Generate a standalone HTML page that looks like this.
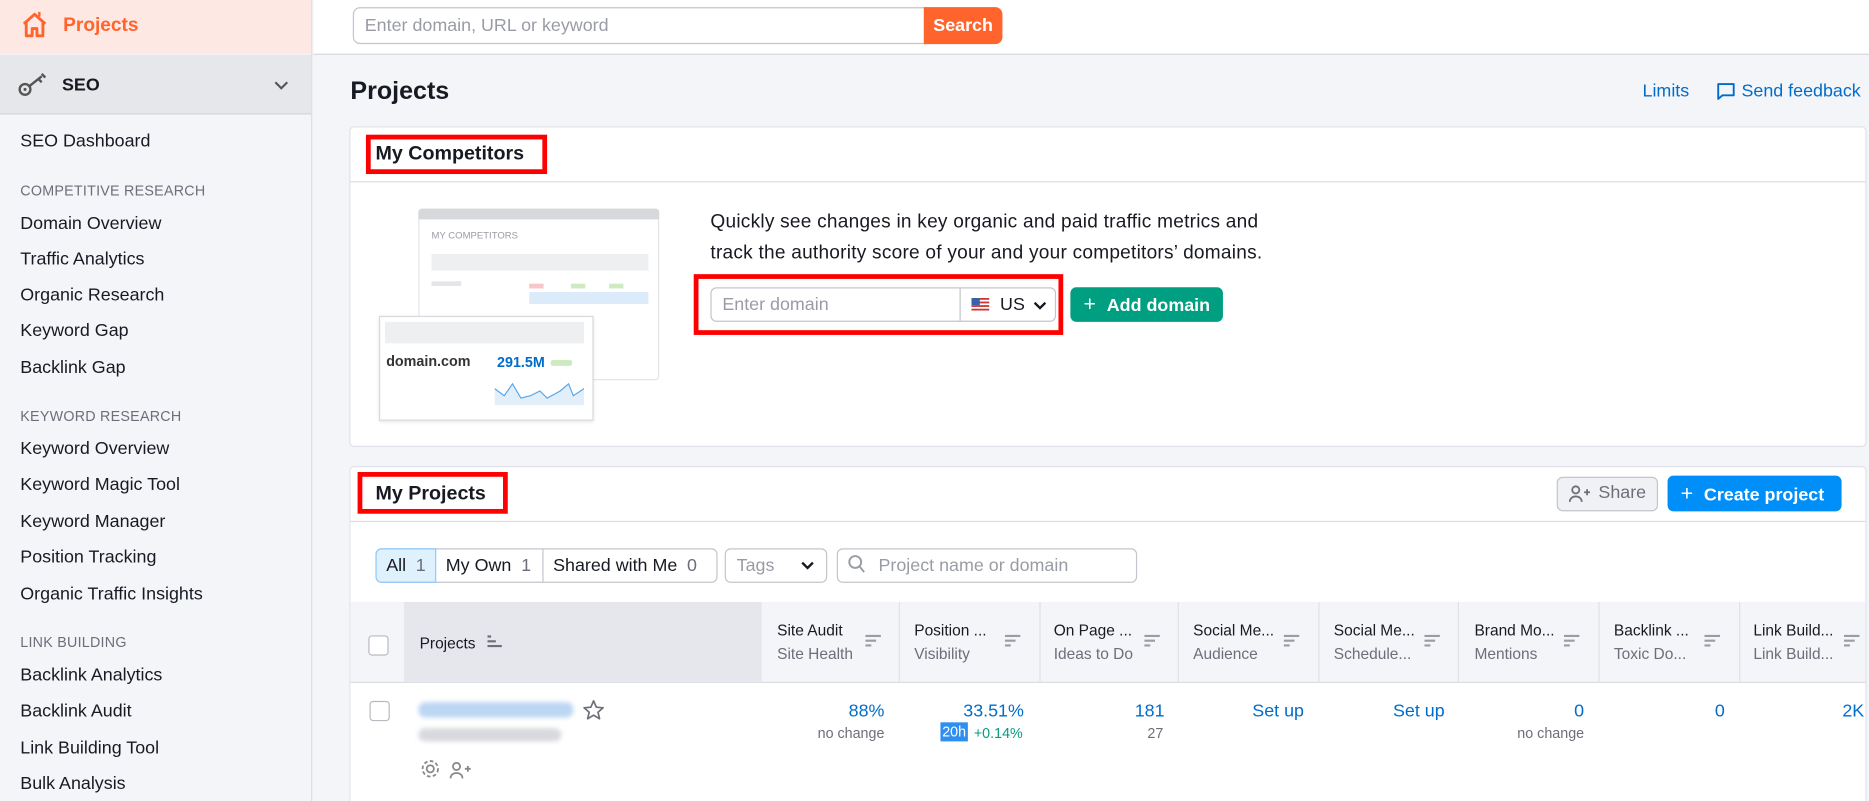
<!DOCTYPE html>
<html><head><meta charset="utf-8"><style>
*{box-sizing:border-box;margin:0;padding:0}
html,body{width:1869px;height:801px;overflow:hidden;background:#f4f5f9}
#w{position:absolute;left:0;top:0;width:1568px;height:672px;overflow:hidden;transform:scale(1.19196);transform-origin:0 0;font-family:"Liberation Sans",Arial,sans-serif;color:#171a22;background:#f4f5f9}
.a{position:absolute;white-space:nowrap}
.side{left:0;top:0;width:262px;height:672px;background:#f4f5f9;border-right:1px solid #dcdde3}
.mi{position:absolute;left:17px;font-size:15px;color:#171a22}
.sh{position:absolute;left:17px;font-size:12px;color:#6c6e79;letter-spacing:.2px}
.card{background:#fff;border:1px solid #e0e1e9;border-radius:4px}
.rb{border:4px solid #f00}
.blue{color:#006dca}
.hd{position:absolute;font-size:13px;color:#171a22;line-height:20px}
.hd span{color:#6c6e79}
.num{position:absolute;font-size:15px;color:#006dca;text-align:right}
.sub{position:absolute;font-size:12px;color:#6c6e79;text-align:right}
</style></head><body><div id="w">
<div class="a side">
 <div class="a" style="left:0;top:0;width:261px;height:45px;background:#fde8e4"></div>
 <svg class="a" style="left:17px;top:8px" width="24" height="26" viewBox="0 0 24 26"><path d="M3 12 L12 4 L21 12 M5 10 V22 H10 V16 H14 V22 H19 V10" fill="none" stroke="#ff642d" stroke-width="2.4" stroke-linejoin="round"/><path d="M16 2 V6" stroke="#ff642d" stroke-width="2"/></svg>
 <div class="a" style="left:53px;top:13px;font-size:16px;color:#ff642d;font-weight:bold">Projects</div>
 <div class="a" style="left:0;top:46px;width:261px;height:50px;background:#e6e7eb;border-bottom:1px solid #d3d4da"></div>
 <svg class="a" style="left:15px;top:60px" width="26" height="22" viewBox="0 0 26 22"><circle cx="6" cy="15" r="4.5" fill="none" stroke="#555" stroke-width="2"/><circle cx="6" cy="15" r="1.3" fill="#555"/><path d="M10 12 L20 4 M17 6 L20 9 M20 2 L23 5" stroke="#555" stroke-width="2" fill="none"/></svg>
 <div class="a" style="left:52px;top:63px;font-size:15px;font-weight:bold">SEO</div>
 <svg class="a" style="left:230px;top:68px" width="12" height="8"><path d="M1 1 L6 6 L11 1" fill="none" stroke="#555" stroke-width="1.8"/></svg>
 <div class="mi" style="top:110px">SEO Dashboard</div>
 <div class="sh" style="top:153px">COMPETITIVE RESEARCH</div>
 <div class="mi" style="top:179px">Domain Overview</div>
 <div class="mi" style="top:209px">Traffic Analytics</div>
 <div class="mi" style="top:239px">Organic Research</div>
 <div class="mi" style="top:269px">Keyword Gap</div>
 <div class="mi" style="top:300px">Backlink Gap</div>
 <div class="sh" style="top:342px">KEYWORD RESEARCH</div>
 <div class="mi" style="top:368px">Keyword Overview</div>
 <div class="mi" style="top:398px">Keyword Magic Tool</div>
 <div class="mi" style="top:429px">Keyword Manager</div>
 <div class="mi" style="top:459px">Position Tracking</div>
 <div class="mi" style="top:490px">Organic Traffic Insights</div>
 <div class="sh" style="top:532px">LINK BUILDING</div>
 <div class="mi" style="top:558px">Backlink Analytics</div>
 <div class="mi" style="top:588px">Backlink Audit</div>
 <div class="mi" style="top:619px">Link Building Tool</div>
 <div class="mi" style="top:649px">Bulk Analysis</div>
</div>
<div class="a" style="left:263px;top:0;width:1305px;height:46px;background:#fff;border-bottom:1px solid #d6d7dd"></div>
<div class="a" style="left:296px;top:6px;width:482px;height:31px;border:1px solid #c4c5cc;border-radius:6px 0 0 6px;background:#fff"></div>
<div class="a" style="left:306px;top:13px;font-size:15px;color:#9a9ca5">Enter domain, URL or keyword</div>
<div class="a" style="left:775px;top:6px;width:66px;height:31px;background:#ff642d;border-radius:0 6px 6px 0;color:#fff;font-size:15px;font-weight:bold;text-align:center;line-height:31px">Search</div>
<div class="a" style="left:294px;top:65px;font-size:21px;font-weight:bold;color:#171a22">Projects</div>
<div class="a blue" style="left:1378px;top:68px;font-size:15px">Limits</div>
<svg class="a" style="left:1440px;top:69px" width="16" height="16" viewBox="0 0 16 16"><path d="M1.5 1.5 H14.5 V11 H5 L1.5 14 Z" fill="none" stroke="#006dca" stroke-width="1.6" stroke-linejoin="round"/></svg>
<div class="a blue" style="left:1461px;top:68px;font-size:15px">Send feedback</div>
<div class="a card" style="left:293px;top:106px;width:1273px;height:269px"></div>
<div class="a" style="left:294px;top:152px;width:1271px;height:1px;background:#dcdde3"></div>
<div class="a rb" style="left:307px;top:113px;width:152px;height:33px"></div>
<div class="a" style="left:315px;top:120px;font-size:16.5px;font-weight:bold">My Competitors</div>
<div class="a" style="left:351px;top:175px;width:202px;height:144px;border:1px solid #e3e4e8;border-radius:3px;background:#fff"></div>
<div class="a" style="left:351px;top:175px;width:202px;height:9px;background:#d6d8dc;border-radius:3px 3px 0 0"></div>
<div class="a" style="left:362px;top:193px;font-size:8px;color:#9a9ca5">MY COMPETITORS</div>
<div class="a" style="left:362px;top:213px;width:182px;height:14px;background:#eeeff1"></div>
<div class="a" style="left:362px;top:236px;width:25px;height:4px;background:#e4e5e8"></div>
<div class="a" style="left:444px;top:238px;width:12px;height:4px;background:#f7c6c6"></div>
<div class="a" style="left:479px;top:238px;width:12px;height:4px;background:#cdeac0"></div>
<div class="a" style="left:511px;top:238px;width:12px;height:4px;background:#cdeac0"></div>
<div class="a" style="left:444px;top:245px;width:100px;height:10px;background:#dcebfa"></div>
<div class="a" style="left:318px;top:265px;width:180px;height:88px;border:1px solid #d8d9de;background:#fff;box-shadow:0 1px 3px rgba(0,0,0,.1)"></div>
<div class="a" style="left:323px;top:270px;width:167px;height:18px;background:#eeeff1"></div>
<div class="a" style="left:324px;top:296px;font-size:12px;font-weight:bold;color:#333">domain.com</div>
<div class="a" style="left:417px;top:297px;font-size:12px;font-weight:bold;color:#006dca">291.5M</div>
<div class="a" style="left:462px;top:302px;width:18px;height:5px;background:#cdeac0;border-radius:2px"></div>
<svg class="a" style="left:415px;top:318px" width="75" height="22"><path d="M0 8 L8 14 L15 4 L22 16 L30 14 L38 10 L44 16 L55 10 L62 4 L66 14 L75 8 L75 22 L0 22Z" fill="#e3eefb"/><path d="M0 8 L8 14 L15 4 L22 16 L30 14 L38 10 L44 16 L55 10 L62 4 L66 14 L75 8" fill="none" stroke="#57a6ec" stroke-width="1"/></svg>
<div class="a" style="left:596px;top:174px;font-size:16px;line-height:26px;color:#171a22;letter-spacing:.2px">Quickly see changes in key organic and paid traffic metrics and<br>track the authority score of your and your competitors’ domains.</div>
<div class="a rb" style="left:582px;top:230px;width:310px;height:51px"></div>
<div class="a" style="left:596px;top:241px;width:290px;height:29px;border:1px solid #c4c5cc;border-radius:5px;background:#fff"></div>
<div class="a" style="left:805px;top:242px;width:1px;height:27px;background:#c4c5cc"></div>
<div class="a" style="left:606px;top:247px;font-size:15px;color:#9a9ca5">Enter domain</div>
<svg class="a" style="left:815px;top:250px" width="15" height="11"><rect width="15" height="11" fill="#fff"/><g fill="#c33"><rect y="0" width="15" height="1.5"/><rect y="3" width="15" height="1.5"/><rect y="6" width="15" height="1.5"/><rect y="9" width="15" height="1.5"/></g><rect width="7" height="6" fill="#3b5fa8"/></svg>
<div class="a" style="left:839px;top:247px;font-size:15px">US</div>
<svg class="a" style="left:867px;top:253px" width="11" height="8"><path d="M1 1 L5.5 5.5 L10 1" fill="none" stroke="#171a22" stroke-width="2"/></svg>
<div class="a" style="left:898px;top:241px;width:128px;height:29px;background:#009f81;border-radius:5px;color:#fff;font-size:15px;font-weight:bold;line-height:29px;padding-left:11px"><span style="font-weight:normal;font-size:18px;margin-right:9px">+</span>Add domain</div>
<div class="a card" style="left:293px;top:391px;width:1273px;height:281px;border-bottom:none;border-radius:4px 4px 0 0"></div>
<div class="a" style="left:294px;top:437px;width:1271px;height:1px;background:#dcdde3"></div>
<div class="a rb" style="left:300px;top:396px;width:126px;height:35px"></div>
<div class="a" style="left:315px;top:405px;font-size:16.5px;font-weight:bold">My Projects</div>
<div class="a" style="left:1306px;top:400px;width:85px;height:29px;background:#f0f1f4;border:1px solid #c4c5cc;border-radius:5px"></div>
<svg class="a" style="left:1316px;top:406px" width="18" height="16"><circle cx="6" cy="5" r="3" fill="none" stroke="#6c6e79" stroke-width="1.5"/><path d="M1 15 C1 9 11 9 11 15" fill="none" stroke="#6c6e79" stroke-width="1.5"/><path d="M13 7 H18 M15.5 4.5 V9.5" stroke="#6c6e79" stroke-width="1.5"/></svg>
<div class="a" style="left:1341px;top:405px;font-size:15px;color:#6c6e79">Share</div>
<div class="a" style="left:1399px;top:399px;width:146px;height:30px;background:#008ff8;border-radius:5px;color:#fff;font-size:15px;font-weight:bold;line-height:30px;padding-left:11px"><span style="font-weight:normal;font-size:18px;margin-right:9px">+</span>Create project</div>
<div class="a" style="left:315px;top:460px;width:287px;height:29px;border:1px solid #c4c5cc;border-radius:5px;background:#fff"></div>
<div class="a" style="left:315px;top:460px;width:51px;height:29px;border:1px solid #8ec9f8;border-radius:5px 0 0 5px;background:#e0f1fe"></div>
<div class="a" style="left:455px;top:461px;width:1px;height:27px;background:#c4c5cc"></div>
<div class="a" style="left:324px;top:466px;font-size:15px">All <span style="color:#6c6e79;margin-left:4px">1</span></div>
<div class="a" style="left:374px;top:466px;font-size:15px">My Own <span style="color:#6c6e79;margin-left:4px">1</span></div>
<div class="a" style="left:464px;top:466px;font-size:15px">Shared with Me <span style="color:#6c6e79;margin-left:4px">0</span></div>
<div class="a" style="left:608px;top:460px;width:86px;height:29px;border:1px solid #c4c5cc;border-radius:5px;background:#fff"></div>
<div class="a" style="left:618px;top:466px;font-size:15px;color:#9a9ca5">Tags</div>
<svg class="a" style="left:672px;top:471px" width="11" height="8"><path d="M1 1 L5.5 5.5 L10 1" fill="none" stroke="#171a22" stroke-width="2"/></svg>
<div class="a" style="left:702px;top:460px;width:252px;height:29px;border:1px solid #c4c5cc;border-radius:5px;background:#fff"></div>
<svg class="a" style="left:711px;top:465px" width="16" height="17"><circle cx="6.5" cy="6.5" r="5" fill="none" stroke="#9a9ca5" stroke-width="1.6"/><path d="M10 10 L14 15" stroke="#9a9ca5" stroke-width="1.6"/></svg>
<div class="a" style="left:737px;top:466px;font-size:15px;color:#9a9ca5">Project name or domain</div>
<div class="a" style="left:294px;top:505px;width:1271px;height:68px;background:#f4f5f9;border-bottom:1px solid #dcdde3"></div>
<div class="a" style="left:339px;top:505px;width:300px;height:67px;background:#e6e7ec"></div>
<div class="a" style="left:309px;top:533px;width:17px;height:17px;border:1px solid #b8bac2;border-radius:3px;background:#fff"></div>
<div class="a" style="left:352px;top:532px;font-size:13px">Projects</div>
<svg class="a" style="left:408px;top:532px" width="14" height="12"><path d="M1 2 H4 M1 6 H8 M1 10 H13" stroke="#6c6e79" stroke-width="1.8"/></svg>
<div class="a" style="left:754px;top:505px;width:1px;height:67px;background:#e0e1e6"></div>
<div class="a" style="left:872px;top:505px;width:1px;height:67px;background:#e0e1e6"></div>
<div class="a" style="left:988px;top:505px;width:1px;height:67px;background:#e0e1e6"></div>
<div class="a" style="left:1106px;top:505px;width:1px;height:67px;background:#e0e1e6"></div>
<div class="a" style="left:1223px;top:505px;width:1px;height:67px;background:#e0e1e6"></div>
<div class="a" style="left:1341px;top:505px;width:1px;height:67px;background:#e0e1e6"></div>
<div class="a" style="left:1459px;top:505px;width:1px;height:67px;background:#e0e1e6"></div>
<div class="hd" style="left:652px;top:519px">Site Audit<br><span>Site Health</span></div>
<div class="hd" style="left:767px;top:519px">Position ...<br><span>Visibility</span></div>
<div class="hd" style="left:884px;top:519px">On Page ...<br><span>Ideas to Do</span></div>
<div class="hd" style="left:1001px;top:519px">Social Me...<br><span>Audience</span></div>
<div class="hd" style="left:1119px;top:519px">Social Me...<br><span>Schedule...</span></div>
<div class="hd" style="left:1237px;top:519px">Brand Mo...<br><span>Mentions</span></div>
<div class="hd" style="left:1354px;top:519px">Backlink ...<br><span>Toxic Do...</span></div>
<div class="hd" style="left:1471px;top:519px">Link Build...<br><span>Link Build...</span></div>
<svg class="a" style="left:726px;top:532px" width="14" height="12"><path d="M0 1.5 H13 M0 5.5 H9 M0 9.5 H5" stroke="#9a9ca5" stroke-width="1.8"/></svg>
<svg class="a" style="left:843px;top:532px" width="14" height="12"><path d="M0 1.5 H13 M0 5.5 H9 M0 9.5 H5" stroke="#9a9ca5" stroke-width="1.8"/></svg>
<svg class="a" style="left:960px;top:532px" width="14" height="12"><path d="M0 1.5 H13 M0 5.5 H9 M0 9.5 H5" stroke="#9a9ca5" stroke-width="1.8"/></svg>
<svg class="a" style="left:1077px;top:532px" width="14" height="12"><path d="M0 1.5 H13 M0 5.5 H9 M0 9.5 H5" stroke="#9a9ca5" stroke-width="1.8"/></svg>
<svg class="a" style="left:1195px;top:532px" width="14" height="12"><path d="M0 1.5 H13 M0 5.5 H9 M0 9.5 H5" stroke="#9a9ca5" stroke-width="1.8"/></svg>
<svg class="a" style="left:1312px;top:532px" width="14" height="12"><path d="M0 1.5 H13 M0 5.5 H9 M0 9.5 H5" stroke="#9a9ca5" stroke-width="1.8"/></svg>
<svg class="a" style="left:1430px;top:532px" width="14" height="12"><path d="M0 1.5 H13 M0 5.5 H9 M0 9.5 H5" stroke="#9a9ca5" stroke-width="1.8"/></svg>
<svg class="a" style="left:1547px;top:532px" width="14" height="12"><path d="M0 1.5 H13 M0 5.5 H9 M0 9.5 H5" stroke="#9a9ca5" stroke-width="1.8"/></svg>
<div class="a" style="left:310px;top:588px;width:17px;height:17px;border:1px solid #b8bac2;border-radius:3px;background:#fff"></div>
<div class="a" style="left:351px;top:589px;width:130px;height:13px;background:#bcd6f3;border-radius:6px;filter:blur(2px)"></div>
<div class="a" style="left:351px;top:611px;width:120px;height:11px;background:#d8d9de;border-radius:6px;filter:blur(2px)"></div>
<svg class="a" style="left:489px;top:587px" width="18" height="17"><path d="M9 1 L11.3 6.3 L17 6.8 L12.7 10.5 L14 16 L9 13 L4 16 L5.3 10.5 L1 6.8 L6.7 6.3Z" fill="none" stroke="#6c6e79" stroke-width="1.4" stroke-linejoin="round"/></svg>
<svg class="a" style="left:352px;top:636px" width="18" height="18"><circle cx="9" cy="9" r="3" fill="none" stroke="#888" stroke-width="1.5"/><circle cx="9" cy="9" r="6.5" fill="none" stroke="#888" stroke-width="1.5" stroke-dasharray="3 2"/></svg>
<svg class="a" style="left:377px;top:638px" width="18" height="16"><circle cx="6" cy="5" r="3" fill="none" stroke="#888" stroke-width="1.5"/><path d="M1 15 C1 9 11 9 11 15" fill="none" stroke="#888" stroke-width="1.5"/><path d="M13 7 H18 M15.5 4.5 V9.5" stroke="#888" stroke-width="1.5"/></svg>
<div class="num" style="right:826px;top:588px">88%</div>
<div class="sub" style="right:826px;top:608px">no change</div>
<div class="num" style="right:709px;top:588px">33.51%</div>
<div class="a" style="left:789px;top:606px;width:23px;height:16px;background:#2e8ff0;color:#fff;font-size:12px;line-height:16px;text-align:center">20h</div>
<div class="a" style="left:817px;top:608px;font-size:12px;color:#009f81">+0.14%</div>
<div class="num" style="right:591px;top:588px">181</div>
<div class="sub" style="right:592px;top:608px">27</div>
<div class="num" style="right:474px;top:588px">Set up</div>
<div class="num" style="right:356px;top:588px">Set up</div>
<div class="num" style="right:239px;top:588px">0</div>
<div class="sub" style="right:239px;top:608px">no change</div>
<div class="num" style="right:121px;top:588px">0</div>
<div class="num" style="right:4px;top:588px">2K</div>
</div></body></html>
